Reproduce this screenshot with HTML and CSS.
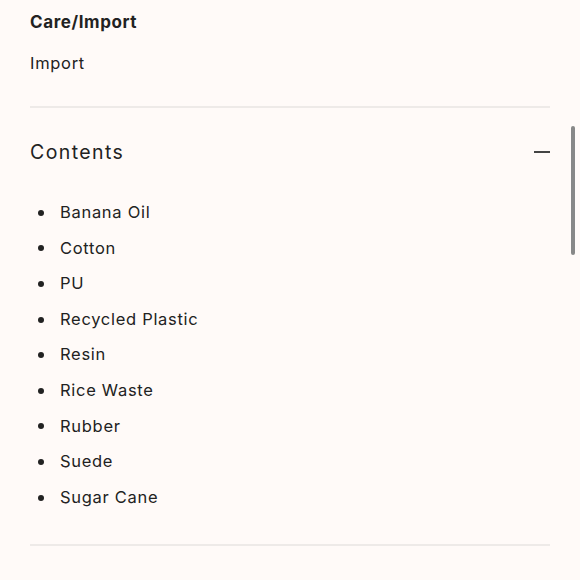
FILE: index.html
```html
<!DOCTYPE html>
<html>
<head>
<meta charset="utf-8">
<link rel="stylesheet" href="styles.css">
</head>
<body>
<div class="page">
  <section class="care">
    <h3 class="care-title">Care/Import</h3>
    <p class="care-text">Import</p>
  </section>
  <section class="accordion">
    <div class="acc-head">
      <span class="acc-title">Contents</span>
      <span class="acc-minus"></span>
    </div>
    <ul class="acc-list">
      <li>Banana Oil</li>
      <li>Cotton</li>
      <li>PU</li>
      <li>Recycled Plastic</li>
      <li>Resin</li>
      <li>Rice Waste</li>
      <li>Rubber</li>
      <li>Suede</li>
      <li>Sugar Cane</li>
    </ul>
  </section>
</div>
<div class="scroll-thumb"></div>
</body>
</html>
```
FILE: styles.css
```css
html, body {
  margin: 0;
  padding: 0;
  background: #fffaf8;
}
body {
  font-family: "Inter", "Liberation Sans", sans-serif;
  color: #222;
  height: 580px;
  overflow: hidden;
}
.page {
  padding: 0 30px;
}
.care {
  padding-top: 11px;
  padding-bottom: 32px;
  border-bottom: 2px solid #eeeae8;
}
.care-title {
  margin: 0;
  font-size: 17px;
  font-weight: 700;
  letter-spacing: 0.6px;
  line-height: 22px;
}
.care-text {
  margin: 19px 0 0;
  font-size: 16.5px;
  letter-spacing: 0.7px;
  line-height: 22px;
}
.accordion {
  border-bottom: 2px solid #eeeae8;
  padding-bottom: 29px;
}
.acc-head {
  display: flex;
  justify-content: space-between;
  align-items: center;
  height: 87px;
}
.acc-title {
  font-size: 19.5px;
  letter-spacing: 1.4px;
  font-weight: 400;
}
.acc-minus {
  width: 16px;
  height: 2px;
  background: #444;
}
.acc-list {
  margin: 0;
  padding: 0;
  list-style: none;
}
.acc-list li {
  display: flex;
  align-items: center;
  font-size: 16.5px;
  letter-spacing: 0.7px;
  line-height: 35.6px;
}
.acc-list li::before {
  content: "";
  width: 6px;
  height: 6px;
  border-radius: 50%;
  background: #222;
  margin: 0 16px 0 8px;
  flex: none;
}
.scroll-thumb {
  position: fixed;
  top: 126px;
  right: 5px;
  width: 4px;
  height: 129px;
  border-radius: 2px;
  background: #888;
}
```
